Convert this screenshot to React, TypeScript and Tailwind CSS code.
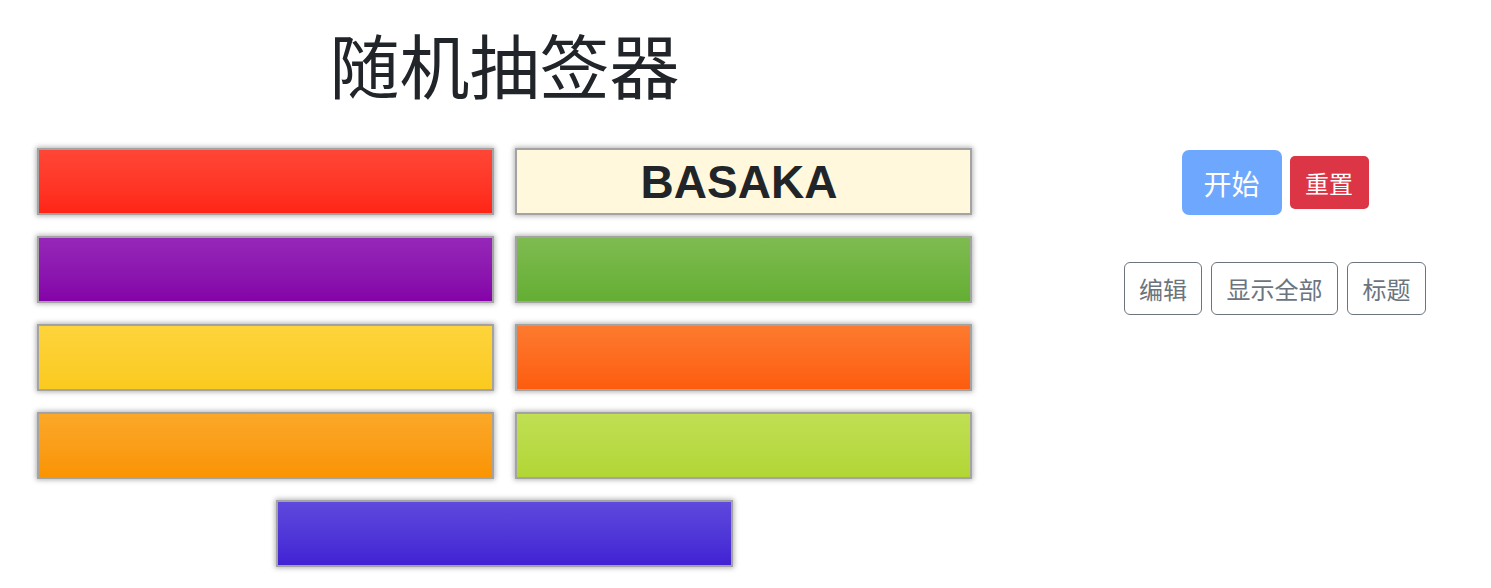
import React from "react";

const cjk = "font-['Microsoft_YaHei','Noto_Sans_CJK_SC',sans-serif]";

const slots: { cls: string; label?: string }[] = [
    { cls: "bg-gradient-to-b from-[#ff4636] to-[#ff2516]" },
    { cls: "bg-[#fff8dc]", label: "BASAKA" },
    { cls: "bg-gradient-to-b from-[#9626b9] to-[#8402a8]" },
    { cls: "bg-gradient-to-b from-[#7fbb50] to-[#64ae33]" },
    { cls: "bg-gradient-to-b from-[#fdd43b] to-[#fbca1e]" },
    { cls: "bg-gradient-to-b from-[#fd7a2e] to-[#fd5c0c]" },
    { cls: "bg-gradient-to-b from-[#fba827] to-[#fa9400]" },
    { cls: "bg-gradient-to-b from-[#c0df53] to-[#b2d635]" },
];

function Slot({ cls, label }: { cls: string; label?: string }) {
    return (
        <div
            className={`h-[67px] w-[457px] border-2 border-[#a3a3a3] shadow-[0_0_5px_1px_rgba(0,0,0,0.3)] flex items-center justify-center ${cls}`}
        >
            {label && (
                <span className="pr-[9px] font-['Liberation_Sans',Arial,sans-serif] font-bold text-[46px] leading-none text-[#212529]">
                    {label}
                </span>
            )}
        </div>
    );
}

const tools = [
    { t: "编辑", w: "w-[78px]" },
    { t: "显示全部", w: "w-[127px]" },
    { t: "标题", w: "w-[79px]" },
];

export default function App() {
    return (
        <div className={`flex w-[1491px] h-[588px] bg-white overflow-hidden ${cjk}`}>
            {/* Board */}
            <div className="w-[1059px] pl-[37px]">
                <div className="w-[935px]">
                    <h1 className="pt-[29px] h-[148px] text-center text-[70px] leading-none text-[#212529]">
                        随机抽签器
                    </h1>
                    <div className="grid grid-cols-2 gap-x-[21px] gap-y-[21px]">
                        {slots.map((s, i) => (
                            <Slot key={i} cls={s.cls} label={s.label} />
                        ))}
                        <div className="col-span-2 flex justify-center">
                            <Slot cls="bg-gradient-to-b from-[#5f48dd] to-[#4221d3]" />
                        </div>
                    </div>
                </div>
            </div>

            {/* Controls */}
            <div className="w-[432px] pt-[150px] flex flex-col items-center">
                <div className="flex items-center gap-[8px]">
                    <button className="h-[65px] w-[100px] rounded-[7px] bg-[#6ea8fe] text-white text-[28px] leading-none">
                        开始
                    </button>
                    <button className="h-[53px] w-[79px] rounded-[5px] bg-[#dc3545] text-white text-[24px] leading-none">
                        重置
                    </button>
                </div>
                <div className="mt-[47px] flex items-center gap-[9px]">
                    {tools.map(({ t, w }) => (
                        <button
                            key={t}
                            className={`h-[53px] ${w} rounded-[6px] border border-[#6c757d] text-[#6c757d] text-[24px] leading-none`}
                        >
                            {t}
                        </button>
                    ))}
                </div>
            </div>
        </div>
    );
}
